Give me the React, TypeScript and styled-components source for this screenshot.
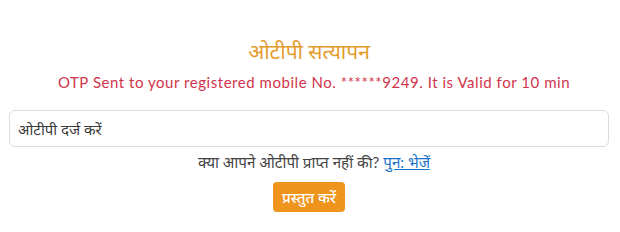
import React from 'react'
import styled, { createGlobalStyle } from 'styled-components'

const GlobalStyle = createGlobalStyle`
    html, body {
        margin: 0;
        padding: 0;
        background: #fff;
    }
    body {
        font-family: Lato, 'Noto Sans', sans-serif;
    }
`

const Wrap = styled.div`
    width: 620px;
    height: 232px;
    box-sizing: border-box;
    padding: 37px 11px 0 9px;
    display: flex;
    flex-direction: column;
    align-items: center;
`

const Title = styled.h2`
    margin: 0;
    color: #e39b2c;
    font: normal normal 400 21px/28px Lato, 'Noto Sans', sans-serif;
`

const Notice = styled.p`
    margin: 6px 0 0 10px;
    color: #d0354b;
    font: normal normal 400 15px/22px Lato, 'Noto Sans', sans-serif;
    letter-spacing: 0.54px;
`

const Input = styled.input`
    margin-top: 17px;
    width: 600px;
    height: 37px;
    box-sizing: border-box;
    border: 1px solid #dcdcdc;
    border-radius: 6px;
    padding: 0 8px;
    font: normal normal 400 15px/20px Lato, 'Noto Sans', sans-serif;
    color: #333;
    outline: none;
    &::placeholder {
        color: #3a3a3a;
    }
`

const Resend = styled.p`
    margin: 5px 0 0 10px;
    color: #444;
    font: normal normal 400 15.2px/20px Lato, 'Noto Sans', sans-serif;
`

const Link = styled.a`
    color: #1a73c8;
    text-decoration: underline;
    cursor: pointer;
`

const Submit = styled.button`
    margin-top: 10px;
    height: 30px;
    padding: 0 9px;
    border: none;
    border-radius: 4px;
    background: #ef951e;
    color: #fff;
    font: normal normal 500 15px/20px Lato, 'Noto Sans', sans-serif;
    cursor: pointer;
`

export default function App() {
    return (
        <>
            <GlobalStyle />
            <Wrap>
                <Title>ओटीपी सत्यापन</Title>
                <Notice>OTP Sent to your registered mobile No. ******9249. It is Valid for 10 min</Notice>
                <Input placeholder="ओटीपी दर्ज करें" />
                <Resend>
                    क्या आपने ओटीपी प्राप्त नहीं की? <Link>पुन: भेजें</Link>
                </Resend>
                <Submit>प्रस्तुत करें</Submit>
            </Wrap>
        </>
    )
}
